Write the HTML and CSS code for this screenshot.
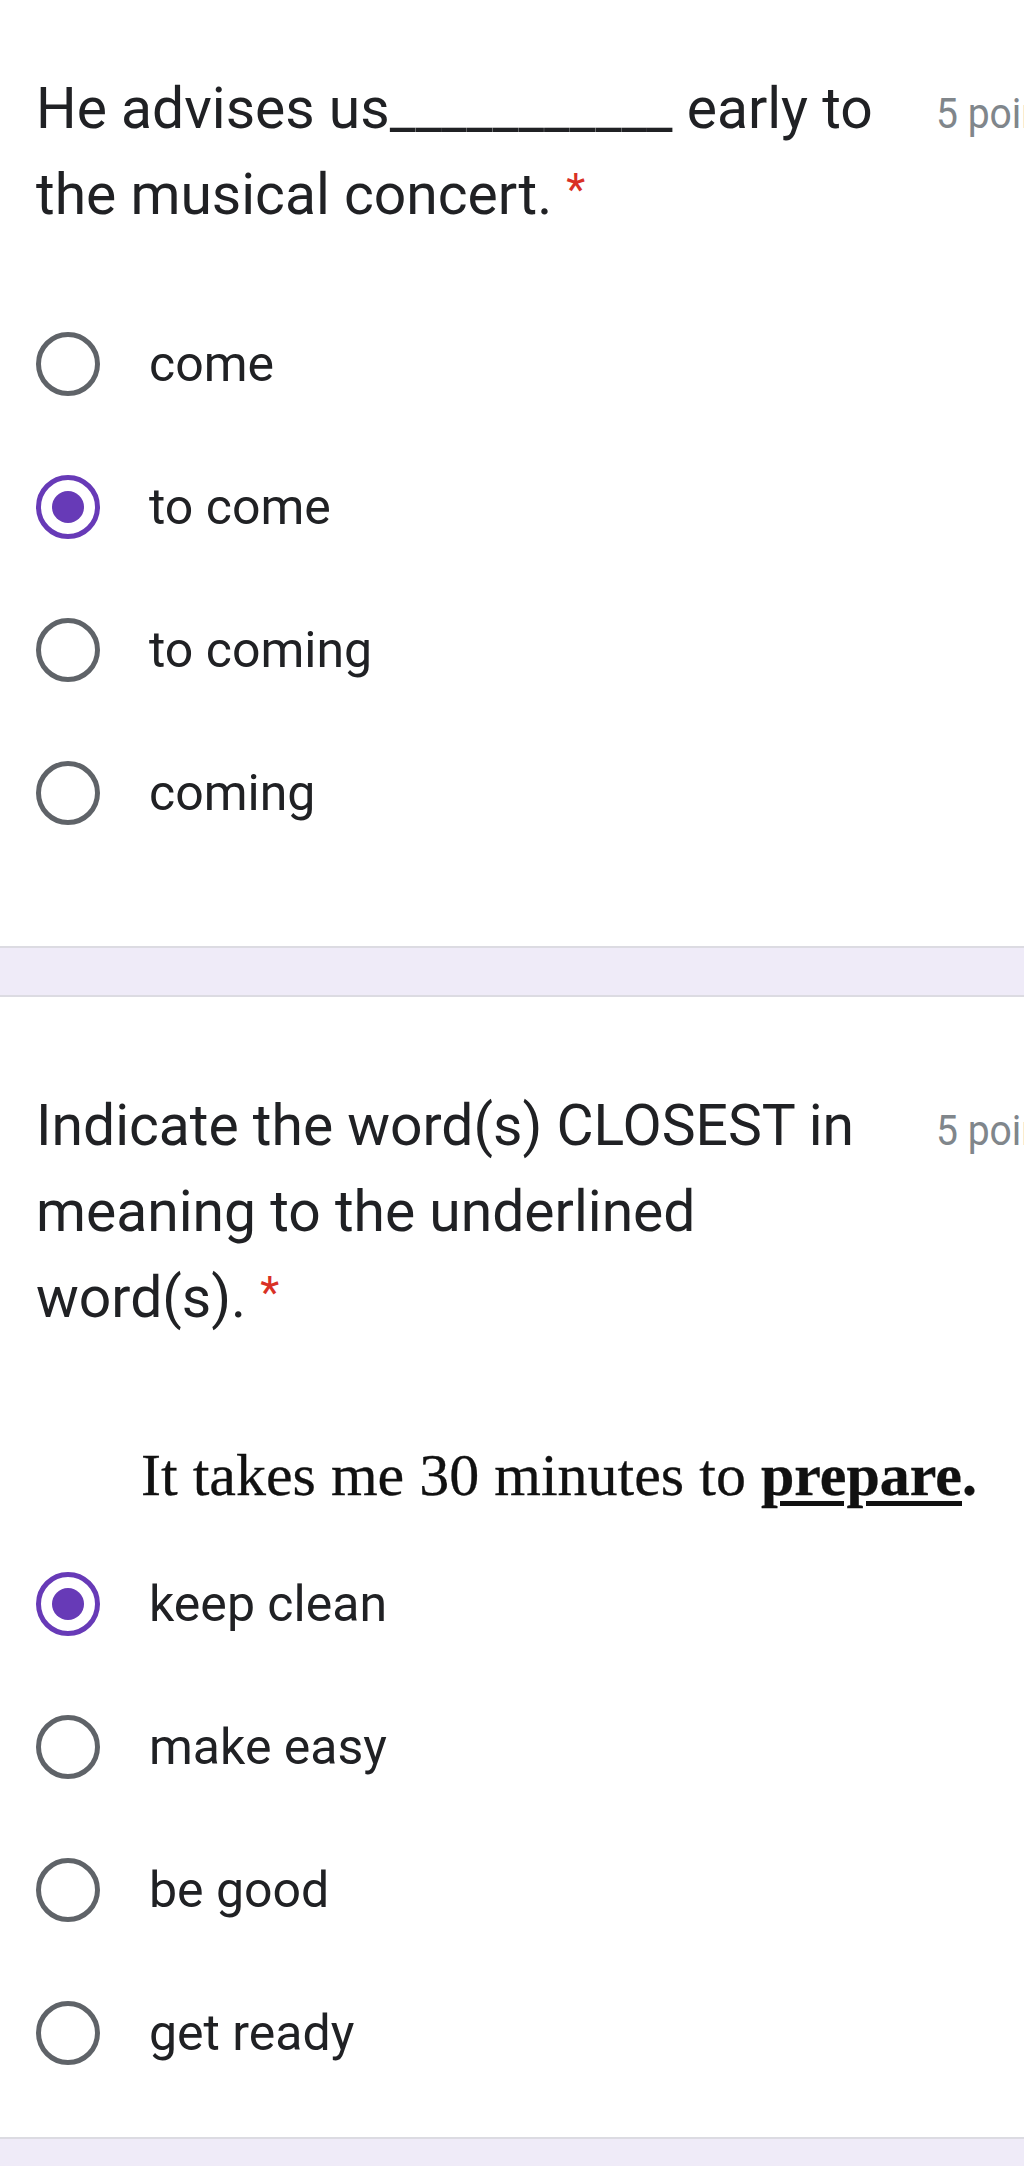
FILE: index.html
```html
<!DOCTYPE html>
<html lang="en">
<head>
<meta charset="utf-8">
<title>Quiz</title>
<link rel="stylesheet" href="styles.css">
</head>
<body>
<main class="form">
  <section class="card card--first">
    <div class="q-head">
      <div class="q-title">He advises us___________ early to the musical concert. <span class="req">*</span></div>
      <div class="points">5 points</div>
    </div>
    <div class="options">
      <label class="option"><span class="radio"></span><span class="opt-text">come</span></label>
      <label class="option"><span class="radio radio--on"></span><span class="opt-text">to come</span></label>
      <label class="option"><span class="radio"></span><span class="opt-text">to coming</span></label>
      <label class="option"><span class="radio"></span><span class="opt-text">coming</span></label>
    </div>
  </section>
  <section class="card">
    <div class="q-head">
      <div class="q-title">Indicate the word(s) CLOSEST in meaning to the underlined word(s). <span class="req">*</span></div>
      <div class="points">5 points</div>
    </div>
    <p class="sentence">It takes me 30 minutes to <b class="ul">prepare</b><b>.</b></p>
    <div class="options options--tight">
      <label class="option"><span class="radio radio--on"></span><span class="opt-text">keep clean</span></label>
      <label class="option"><span class="radio"></span><span class="opt-text">make easy</span></label>
      <label class="option"><span class="radio"></span><span class="opt-text">be good</span></label>
      <label class="option"><span class="radio"></span><span class="opt-text">get ready</span></label>
    </div>
  </section>
</main>
</body>
</html>
```

FILE: styles.css
```css
html, body {
  margin: 0;
  padding: 0;
  overflow-x: hidden;
}
body {
  background: #efebf8;
  font-family: Roboto, "Liberation Sans", sans-serif;
  color: #202124;
}
.form {
  display: flex;
  flex-direction: column;
  gap: 47px;
  background: #efebf8;
  min-height: 2166px;
}
.card {
  background: #ffffff;
  border-top: 2px solid #dcdbe2;
  border-bottom: 2px solid #dcdbe2;
  padding: 86px 0 33px 36px;
  overflow: hidden;
}
.card--first {
  border-top: none;
  padding-top: 66px;
  padding-bottom: 82px;
}
.q-head {
  display: flex;
  align-items: baseline;
  gap: 60px;
}
.q-title {
  flex: 0 0 840px;
  font-size: 57px;
  line-height: 86px;
  color: #202124;
}
.req {
  color: #d93025;
  font-size: 44px;
  line-height: 0;
  vertical-align: 9px;
}
.points {
  white-space: nowrap;
  font-size: 42px;
  color: #80868b;
  transform: scaleX(0.93);
  transform-origin: left center;
}
.sentence {
  margin: 99px 0 0 0;
  padding-left: 105px;
  font-family: "Liberation Serif", "Times New Roman", serif;
  font-size: 60px;
  line-height: 70px;
  color: #111111;
  -webkit-text-stroke: 0.3px #111111;
}
.sentence b {
  font-weight: 700;
}
.ul {
  text-decoration: underline;
  text-decoration-thickness: 5px;
  text-underline-offset: 6px;
}
.options {
  display: flex;
  flex-direction: column;
  margin-top: 54px;
}
.options--tight {
  margin-top: 22px;
}
.option {
  display: flex;
  align-items: center;
  height: 143px;
  gap: 49px;
}
.radio {
  box-sizing: border-box;
  width: 64px;
  height: 64px;
  border: 5px solid #5f6368;
  border-radius: 50%;
  display: flex;
  align-items: center;
  justify-content: center;
  flex: none;
}
.radio--on {
  border-color: #673ab7;
}
.radio--on::after {
  content: "";
  width: 32px;
  height: 32px;
  border-radius: 50%;
  background: #673ab7;
}
.opt-text {
  font-size: 50px;
  color: #202124;
}
```
